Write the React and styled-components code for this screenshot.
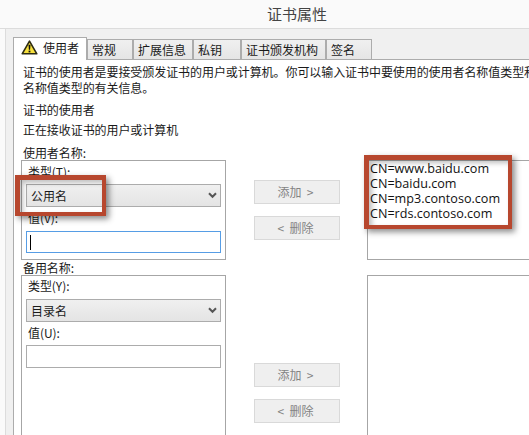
import React from "react";
import styled, { createGlobalStyle } from "styled-components";

const GlobalStyle = createGlobalStyle`
  html, body {
    margin: 0;
    padding: 0;
    overflow: hidden;
    background: #fafafa;
  }
  * {
    box-sizing: border-box;
  }
`;

const TABS = [
  { label: "常规", width: 46 },
  { label: "扩展信息", width: 60 },
  { label: "私钥", width: 48 },
  { label: "证书颁发机构", width: 85 },
  { label: "签名", width: 46 },
];

const NAMES = ["CN=www.baidu.com", "CN=baidu.com", "CN=mp3.contoso.com", "CN=rds.contoso.com"];

const WarningIcon = () => (
  <svg width="17" height="15" viewBox="0 0 17 15">
    <path d="M8.5 1.2 L15.8 13.8 H1.2 Z" fill="#f7e03c" stroke="#2e2c12" strokeWidth="1.6" strokeLinejoin="round" />
    <path d="M7.5 4.8 H9.5 L9.1 9.8 H7.9 Z" fill="#111" />
    <rect x="7.6" y="10.6" width="1.8" height="1.8" fill="#111" />
  </svg>
);

const Chevron = () => (
  <svg width="9" height="7" viewBox="0 0 9 7">
    <path d="M1 1.2 L4.5 4.8 L8 1.2" fill="none" stroke="#555" strokeWidth="2" />
  </svg>
);

const App = () => (
  <Page>
    <GlobalStyle />
    <TitleBar>证书属性</TitleBar>
    <Frame>
      <TabStrip>
        <ActiveTab>
          <WarningIcon />
          <ActiveLabel>使用者</ActiveLabel>
        </ActiveTab>
        {TABS.map((tab) => (
          <Tab key={tab.label} $width={tab.width}>
            {tab.label}
          </Tab>
        ))}
      </TabStrip>
      <Panel>
        <Intro>
          <Line>证书的使用者是要接受颁发证书的用户或计算机。你可以输入证书中要使用的使用者名称值类型和</Line>
          <Line>名称值类型的有关信息。</Line>
        </Intro>
        <Subject>
          <Line>证书的使用者</Line>
          <Line>正在接收证书的用户或计算机</Line>
        </Subject>
        <SectionLabel $top={7}>使用者名称:</SectionLabel>
        <Row>
          <FieldBox $height={100}>
            <FieldLabel>类型(T):</FieldLabel>
            <Select>
              公用名
              <Chevron />
            </Select>
            <FieldLabel $top={3}>值(V):</FieldLabel>
            <Input $focused $top={5}>
              <Caret />
            </Input>
            <SelectHighlight />
          </FieldBox>
          <ButtonColumn $top={20}>
            <Button>添加  &gt;</Button>
            <Button>&lt;  删除</Button>
          </ButtonColumn>
          <ListBox $height={100}>
            {NAMES.map((name) => (
              <ListItem key={name}>{name}</ListItem>
            ))}
            <ListHighlight />
          </ListBox>
        </Row>
        <SectionLabel>备用名称:</SectionLabel>
        <Row>
          <FieldBox $height={220}>
            <FieldLabel $top={-1}>类型(Y):</FieldLabel>
            <Select $top={5}>
              目录名
              <Chevron />
            </Select>
            <FieldLabel $top={3}>值(U):</FieldLabel>
            <Input $top={4} />
          </FieldBox>
          <ButtonColumn $top={88}>
            <Button>添加  &gt;</Button>
            <Button>&lt;  删除</Button>
          </ButtonColumn>
          <ListBox $height={220} />
        </Row>
      </Panel>
    </Frame>
  </Page>
);

const Page = styled.div`
  width: 529px;
  height: 435px;
  overflow: hidden;
  display: flex;
  flex-direction: column;
  background: #fafafa;
  color: #1a1a1a;
  font-family: "Open Sans", "Noto Sans CJK SC", sans-serif;
  font-size: 12px;
`;

const TitleBar = styled.div`
  height: 29px;
  flex: none;
  padding-left: 267px;
  border-bottom: 1px solid #dcdcdc;
  font-family: "Noto Sans CJK SC", sans-serif;
  font-size: 15px;
  line-height: 28px;
  color: #444;
`;

const Frame = styled.div`
  flex: 1;
  min-height: 0;
  margin-left: 5px;
  padding: 8px 0 0 7px;
  border-left: 1px solid #dcdcdc;
  background: #f0f0f0;
`;

const TabStrip = styled.div`
  display: flex;
  align-items: flex-end;
  height: 22px;
`;

const ActiveTab = styled.div`
  position: relative;
  z-index: 1;
  display: flex;
  align-items: center;
  gap: 5px;
  width: 74px;
  height: 23px;
  margin-bottom: -1px;
  padding: 0 0 3px 7px;
  background: #fff;
  border: 1px solid #acacac;
  border-bottom: none;
`;

const ActiveLabel = styled.span`
  font-family: "Noto Sans CJK SC", sans-serif;
  line-height: 16px;
`;

const Tab = styled.div`
  width: ${(p) => p.$width}px;
  height: 20px;
  padding-left: 5px;
  background: linear-gradient(#f0f0f0, #e5e5e5);
  border: 1px solid #acacac;
  border-bottom: none;
  border-left-width: 0;
  box-shadow: inset 1px 0 0 #acacac;
  font-family: "Noto Sans CJK SC", sans-serif;
  line-height: 19px;
  white-space: nowrap;
`;

const Panel = styled.div`
  height: 400px;
  padding: 4px 0 0 7px;
  background: #fff;
  border-top: 1px solid #acacac;
  border-left: 1px solid #acacac;
  overflow: hidden;
`;

const Line = styled.div`
  height: 16px;
  line-height: 16px;
  letter-spacing: -0.07px;
  font-family: "Noto Sans CJK SC", sans-serif;
  white-space: nowrap;
`;

const Intro = styled.div`
  padding-left: 2px;
`;

const Subject = styled.div`
  display: flex;
  flex-direction: column;
  gap: 4px;
  margin-top: 6px;
  padding-left: 2px;
`;

const SectionLabel = styled(Line)`
  height: 15px;
  margin-top: ${(p) => p.$top || 0}px;
  padding-left: 2px;
`;

const Row = styled.div`
  display: flex;
  align-items: flex-start;
`;

const FieldBox = styled.div`
  position: relative;
  flex: none;
  width: 205px;
  height: ${(p) => p.$height}px;
  padding: 3px 4px 0;
  border: 1px solid #a6a6a6;
`;

const FieldLabel = styled(Line)`
  margin-top: ${(p) => p.$top || 0}px;
  padding-left: 2px;
`;

const Select = styled.div`
  display: flex;
  align-items: center;
  justify-content: space-between;
  height: 23px;
  margin-top: ${(p) => p.$top || 4}px;
  padding: 0 3px 0 4px;
  background: linear-gradient(#f0f0f0, #e4e4e4);
  border: 1px solid #acacac;
  font-family: "Noto Sans CJK SC", sans-serif;
`;

const Input = styled.div`
  display: flex;
  align-items: center;
  height: ${(p) => (p.$focused ? 22 : 23)}px;
  margin-top: ${(p) => p.$top}px;
  padding-left: 3px;
  background: #fff;
  border: 1px solid ${(p) => (p.$focused ? "#569de5" : "#acacac")};
`;

const Caret = styled.span`
  width: 1px;
  height: 15px;
  background: #000;
`;

const ButtonColumn = styled.div`
  flex: none;
  display: flex;
  flex-direction: column;
  gap: 12px;
  width: 86px;
  margin: 0 27px 0 28px;
  padding-top: ${(p) => p.$top}px;
`;

const Button = styled.div`
  height: 24px;
  padding-right: 3px;
  background: #efefef;
  border: 1px solid #d9d9d9;
  color: #838383;
  font-family: "Noto Sans CJK SC", sans-serif;
  line-height: 22px;
  text-align: center;
  white-space: pre;
`;

const ListBox = styled.div`
  position: relative;
  flex: none;
  width: 200px;
  height: ${(p) => p.$height}px;
  padding: 0 0 0 2px;
  border: 1px solid #a6a6a6;
`;

const ListItem = styled.div`
  height: 15px;
  font-size: 12.6px;
  line-height: 15px;
  white-space: nowrap;
  color: #111;
`;

const Highlight = styled.div`
  position: absolute;
  border-style: solid;
  border-color: #b7472e;
  border-width: 5px 4px 4px 5px;
  box-shadow: 3px 3px 6px rgba(0, 0, 0, 0.45), inset 3px 3px 5px rgba(0, 0, 0, 0.25);
`;

const SelectHighlight = styled(Highlight)`
  left: -7px;
  top: 14px;
  width: 91px;
  height: 41px;
`;

const ListHighlight = styled(Highlight)`
  left: -4px;
  top: -6px;
  width: 148px;
  height: 74px;
`;

export default App;
